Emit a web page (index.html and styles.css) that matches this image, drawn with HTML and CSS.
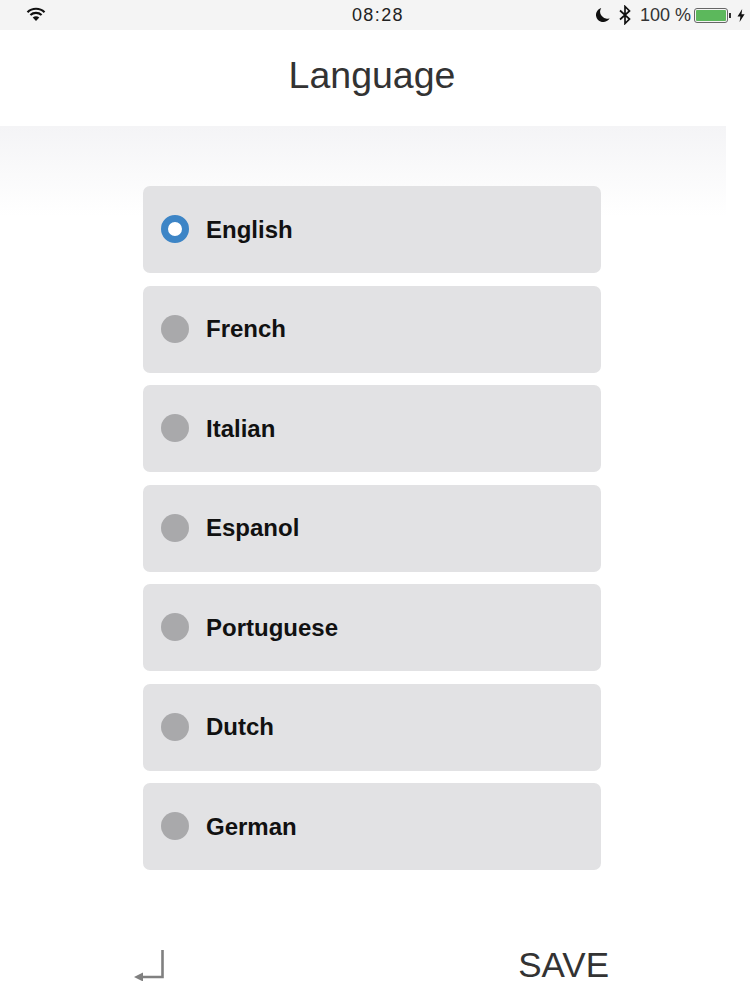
FILE: index.html
```html
<!DOCTYPE html>
<html lang="en">
<head>
    <meta charset="UTF-8">
    <meta name="viewport" content="width=device-width, initial-scale=1.0">
    <title>Language</title>
    <link rel="stylesheet" href="styles.css">
</head>
<body>
    <div class="status-bar">
        <svg class="wifi" width="20" height="16" viewBox="0 0 20 16">
            <path d="M1.5 6.2C6.2 1.6 13.8 1.6 18.5 6.2M4.4 9C7.6 6.1 12.4 6.1 15.6 9" fill="none" stroke="#111" stroke-width="2.2"/>
            <path d="M6.7 11.4C8.7 9.9 11.3 9.9 13.3 11.4L10 15Z" fill="#111"/>
        </svg>
        <span class="clock">08:28</span>
        <div class="status-right">
            <svg width="15" height="16" viewBox="0 0 15 16">
                <path d="M6.2 1A7.2 7.2 0 1 0 14.6 11.2 7 7 0 0 1 6.2 1Z" fill="#111"/>
            </svg>
            <svg class="bt" width="12" height="20" viewBox="0 0 12 20">
                <path d="M1 5.5 10.5 14 6 18.5V1.5L10.5 6 1 14.5" fill="none" stroke="#111" stroke-width="1.7"/>
            </svg>
            <span class="percent">100 %</span>
            <div class="battery"><div class="battery-level"></div></div>
            <div class="battery-tip"></div>
            <svg class="bolt" width="8" height="13" viewBox="0 0 8 13">
                <path d="M5.2 0 .5 7.4H3.4L2.6 13 7.6 5.2H4.5Z" fill="#111"/>
            </svg>
        </div>
    </div>

    <h1>Language</h1>

    <div class="content">
        <ul class="lang-list">
            <li class="lang-row"><span class="radio selected"></span>English</li>
            <li class="lang-row"><span class="radio"></span>French</li>
            <li class="lang-row"><span class="radio"></span>Italian</li>
            <li class="lang-row"><span class="radio"></span>Espanol</li>
            <li class="lang-row"><span class="radio"></span>Portuguese</li>
            <li class="lang-row"><span class="radio"></span>Dutch</li>
            <li class="lang-row"><span class="radio"></span>German</li>
        </ul>
    </div>

    <div class="footer">
        <svg class="back" width="32" height="36" viewBox="0 0 32 36">
            <path d="M29.5 5V32H8" fill="none" stroke="#808080" stroke-width="2.6"/>
            <path d="M1 32 10 27.5V36.5Z" fill="#808080"/>
        </svg>
        <span class="save">SAVE</span>
    </div>
</body>
</html>
```

FILE: styles.css
```css
html, body {
    height: 1000px;
    overflow: hidden;
}

body {
    margin: 0;
    font-family: "Liberation Sans", Arial, sans-serif;
    background-color: #fff;
}

.status-bar {
    height: 30px;
    background-color: #f4f4f4;
    display: flex;
    justify-content: space-between;
    align-items: center;
    padding: 0 5px 0 26px;
    color: #222;
}

.wifi { margin-top: -2px; }

.clock {
    font-size: 18px;
    letter-spacing: 1.4px;
    margin-left: 115px;
}

.status-right {
    display: flex;
    align-items: center;
    justify-content: flex-end;
}

.bt { margin-left: 9px; }

.percent {
    font-size: 18px;
    margin-left: 9px;
    color: #333;
}

.battery {
    width: 34px;
    height: 15px;
    margin-left: 3px;
    padding: 1px;
    box-sizing: border-box;
    border: 1px solid #666;
    border-radius: 3px;
}

.battery-level {
    height: 100%;
    background-color: #5cb85c;
    border-radius: 1px;
}

.battery-tip {
    width: 2px;
    height: 5px;
    margin-left: 1px;
    background-color: #333;
}

.bolt { margin-left: 6px; }

h1 {
    margin: 0;
    height: 96px;
    line-height: 90px;
    padding-right: 6px;
    font-size: 37.5px;
    font-weight: normal;
    text-align: center;
    color: #333;
}

.content {
    padding: 60px 149px 0 143px;
    background-image: linear-gradient(#f4f4f6, #fff);
    background-size: 726px 90px;
    background-repeat: no-repeat;
}

.lang-list {
    list-style: none;
    margin: 0;
    padding: 0;
    display: flex;
    flex-direction: column;
    gap: 12.5px;
}

.lang-row {
    height: 87px;
    display: flex;
    align-items: center;
    padding-left: 18px;
    box-sizing: border-box;
    background-color: #e2e2e4;
    border-radius: 7px;
    font-size: 24px;
    font-weight: bold;
    color: #111;
}

.radio {
    width: 28px;
    height: 28px;
    margin-right: 17px;
    margin-top: -1px;
    border-radius: 50%;
    background-color: #a9a9ab;
    box-sizing: border-box;
}

.radio.selected {
    background-color: #fff;
    border: 7.5px solid #3d85c6;
}

.footer {
    display: flex;
    justify-content: space-between;
    align-items: flex-start;
    margin-top: 75px;
    padding: 0 141px 0 133px;
}

.save {
    font-size: 35px;
    color: #333;
}
```
